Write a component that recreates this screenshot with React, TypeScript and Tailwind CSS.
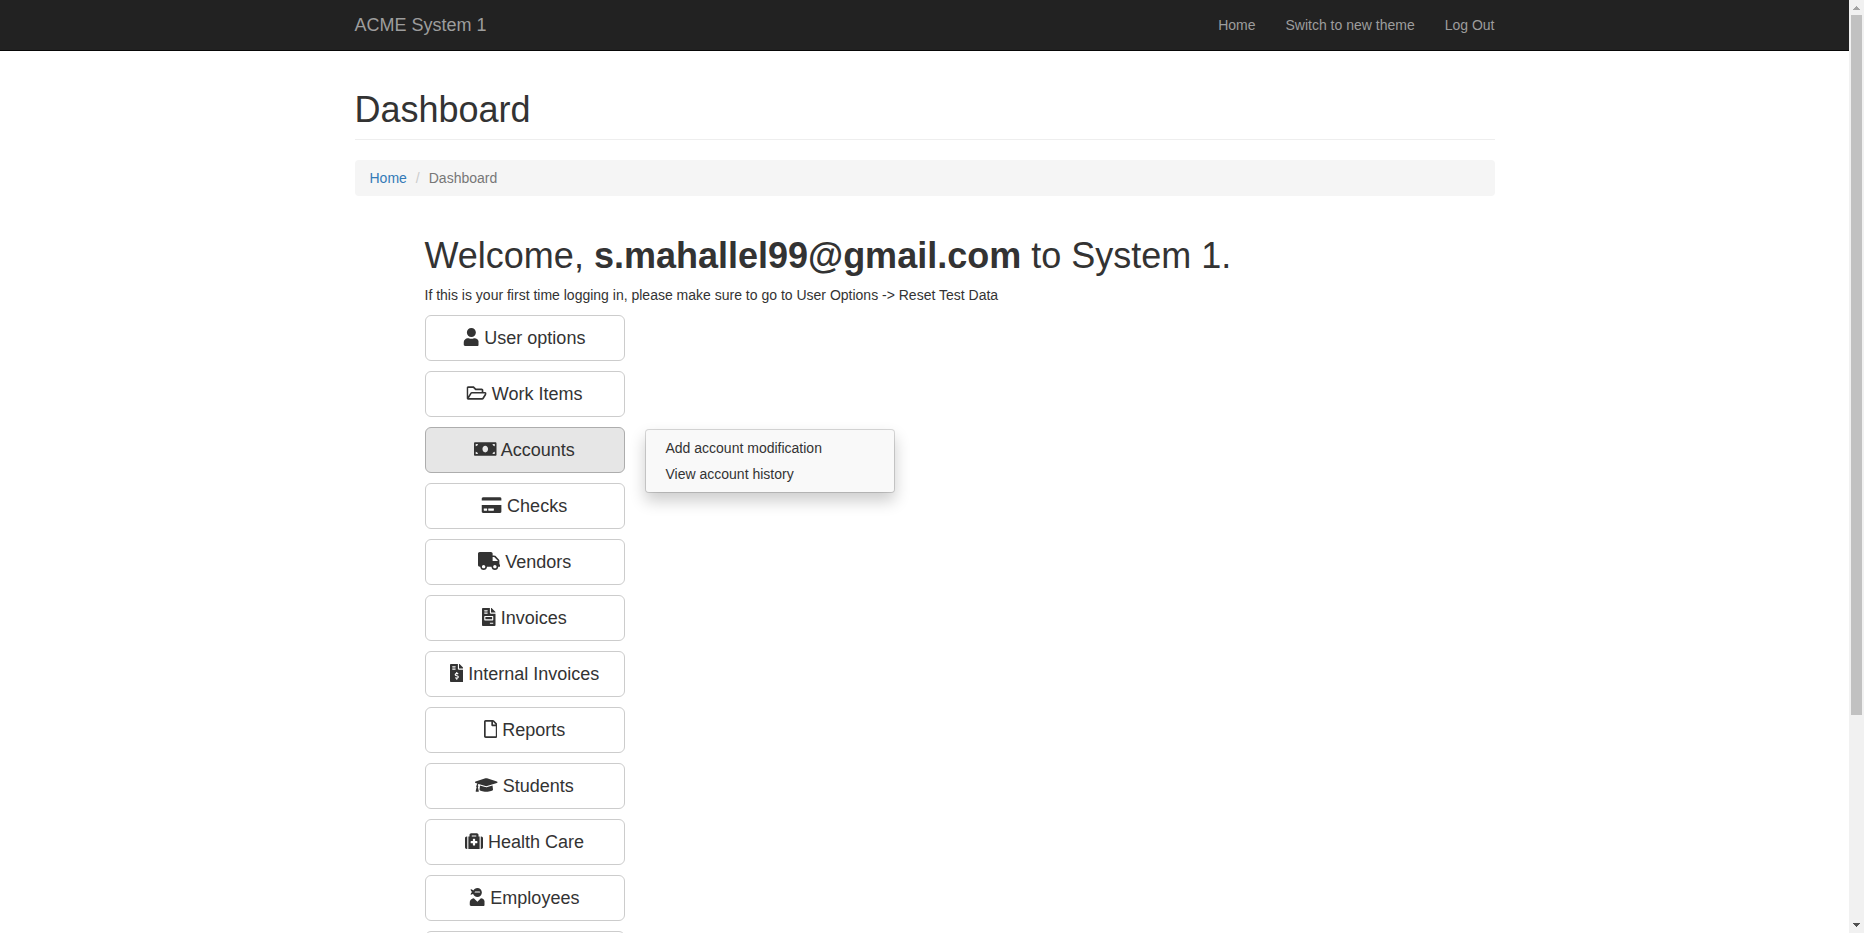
import React from "react";
import type { IconType } from "react-icons";
import {
  FaUser,
  FaRegFolderOpen,
  FaMoneyBill,
  FaCreditCard,
  FaTruck,
  FaFileInvoice,
  FaFileInvoiceDollar,
  FaRegFile,
  FaGraduationCap,
  FaMedkit,
  FaUserNinja,
} from "react-icons/fa";

type MenuEntry = {
  label: string;
  icon?: IconType;
  iconWidth: string;
  items?: string[];
};

const menu: MenuEntry[] = [
  { label: "User options", icon: FaUser, iconWidth: "w-[15.75px] -translate-x-[0.5px]" },
  { label: "Work Items", icon: FaRegFolderOpen, iconWidth: "w-[20.25px] -translate-x-[0.5px]" },
  {
    label: "Accounts",
    icon: FaMoneyBill,
    iconWidth: "w-[22.5px]",
    items: ["Add account modification", "View account history"],
  },
  { label: "Checks", icon: FaCreditCard, iconWidth: "w-[20.25px] -translate-x-[0.5px]" },
  { label: "Vendors", icon: FaTruck, iconWidth: "w-[22.5px]" },
  { label: "Invoices", icon: FaFileInvoice, iconWidth: "w-[13.5px]" },
  { label: "Internal Invoices", icon: FaFileInvoiceDollar, iconWidth: "w-[13.5px]" },
  { label: "Reports", icon: FaRegFile, iconWidth: "w-[13.5px]" },
  { label: "Students", icon: FaGraduationCap, iconWidth: "w-[22.5px]" },
  { label: "Health Care", icon: FaMedkit, iconWidth: "w-[18px]" },
  { label: "Employees", icon: FaUserNinja, iconWidth: "w-[15.75px] -translate-x-[0.5px]" },
  { label: "", iconWidth: "" },
];

function Navbar() {
  return (
    <nav className="h-[51px] border-b border-[#080808] bg-[#222222] text-[#9d9d9d]">
      <div className="mx-auto flex w-[1140px] justify-between">
        <a className="pt-[15px] text-[18px] leading-5">ACME System 1</a>
        <ul className="flex gap-[30px] pt-[15px]">
          <li>Home</li>
          <li>Switch to new theme</li>
          <li>Log Out</li>
        </ul>
      </div>
    </nav>
  );
}

function SubMenu({ items }: { items: string[] }) {
  return (
    <ul className="absolute top-[2px] left-[220px] w-[250px] rounded-[4px] border border-black/15 bg-[#f9f9f9] bg-clip-padding py-[5px] text-left text-sm shadow-[0_8px_16px_rgba(0,0,0,0.2)]">
      {items.map((item) => (
        <li key={item} className="px-5 py-[3px] leading-5">
          {item}
        </li>
      ))}
    </ul>
  );
}

function MenuButton({ label, icon: Icon, iconWidth, items }: MenuEntry) {
  const state = items ? "bg-[#e6e6e6] border-[#adadad]" : "bg-white border-[#cccccc]";
  return (
    <div className="relative w-[200px]">
      <button
        className={`block h-[46px] w-full rounded-[6px] border text-center text-[18px] leading-6 whitespace-nowrap ${state}`}
      >
        {Icon && <Icon className={`inline-block h-[18px] align-[-2.25px] ${iconWidth}`} />} {label}
      </button>
      {items && <SubMenu items={items} />}
    </div>
  );
}

function Scrollbar() {
  return (
    <div className="flex h-full w-[15px] shrink-0 flex-col items-center bg-[#f1f1f1]">
      <svg className="h-[15px] w-[15px]" viewBox="0 0 15 15" shapeRendering="crispEdges">
        <path d="M7 6h1v1h1v1h1v1h1v1H4V9h1V8h1V7h1z" fill="#a3a3a3" />
      </svg>
      <div className="h-[700px] w-[11px] bg-[#c1c1c1]" />
      <div className="grow" />
      <svg className="h-[15px] w-[15px]" viewBox="0 0 15 15" shapeRendering="crispEdges">
        <path d="M4 5h7v1h-1v1H9v1H8v1H7V8H6V7H5V6H4z" fill="#505050" />
      </svg>
    </div>
  );
}

export default function App() {
  return (
    <div className="flex h-[933px] w-[1864px] overflow-hidden bg-white font-['Liberation_Sans',Arial,sans-serif] text-sm leading-5 text-[#333333]">
      <div className="h-full min-w-0 grow overflow-hidden">
        <Navbar />
        <main className="mx-auto w-[1140px] pt-[39px]">
          <h1 className="border-b border-[#eeeeee] pb-[9px] text-[36px] leading-[39.6px]">Dashboard</h1>
          <ol className="mt-5 flex rounded-[4px] bg-[#f5f5f5] px-[15px] py-2">
            <li className="text-[#337ab7]">Home</li>
            <li className="px-[9px] text-[#cccccc]">/</li>
            <li className="text-[#777777]">Dashboard</li>
          </ol>
          <section className="pt-10 pl-[70px]">
            <h2 className="text-[36px] leading-[39.6px]">
              Welcome, <b className="font-bold">s.mahallel99@gmail.com</b> to System 1.
            </h2>
            <p className="mt-[10px]">
              If this is your first time logging in, please make sure to go to User Options -&gt; Reset Test Data
            </p>
            <div className="mt-[10px] flex flex-col gap-[10px]">
              {menu.map((entry) => (
                <MenuButton key={entry.label} {...entry} />
              ))}
            </div>
          </section>
        </main>
      </div>
      <Scrollbar />
    </div>
  );
}
